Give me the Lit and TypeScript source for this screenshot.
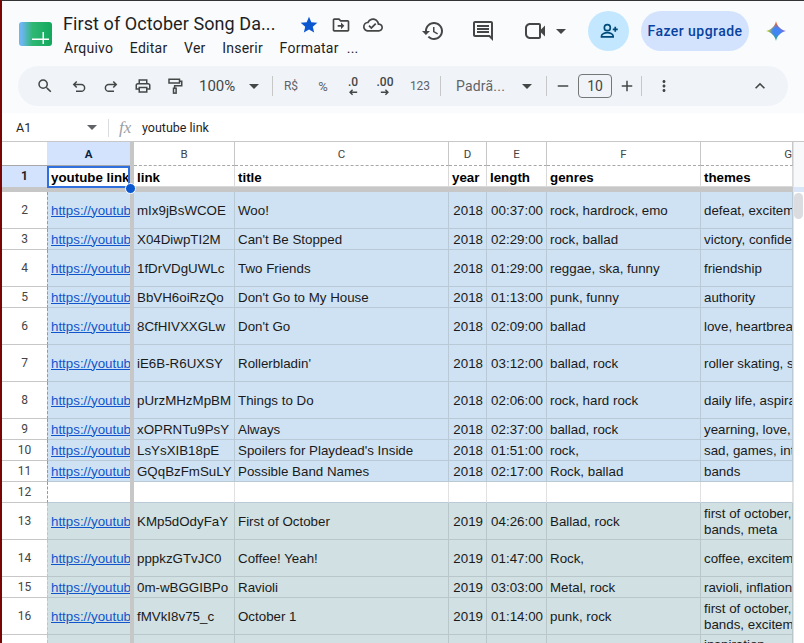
import { LitElement, html, css, svg } from 'lit';
import { customElement } from 'lit/decorators.js';

const BLUE = 'blue';
const TEAL = 'teal';

type Row = {
    n: number;
    h: number;
    tone: string;
    cells: string[];
};

// link, title, year, length, genres, themes
const rows: Row[] = [
    { n: 2, h: 37, tone: BLUE, cells: ['mIx9jBsWCOE', 'Woo!', '2018', '00:37:00', 'rock, hardrock, emo', 'defeat, excitement'] },
    { n: 3, h: 21, tone: BLUE, cells: ['X04DiwpTI2M', "Can't Be Stopped", '2018', '02:29:00', 'rock, ballad', 'victory, confidence'] },
    { n: 4, h: 37, tone: BLUE, cells: ['1fDrVDgUWLc', 'Two Friends', '2018', '01:29:00', 'reggae, ska, funny', 'friendship'] },
    { n: 5, h: 21, tone: BLUE, cells: ['BbVH6oiRzQo', "Don't Go to My House", '2018', '01:13:00', 'punk, funny', 'authority'] },
    { n: 6, h: 37, tone: BLUE, cells: ['8CfHIVXXGLw', "Don't Go", '2018', '02:09:00', 'ballad', 'love, heartbreak'] },
    { n: 7, h: 37, tone: BLUE, cells: ['iE6B-R6UXSY', "Rollerbladin'", '2018', '03:12:00', 'ballad, rock', 'roller skating, summer'] },
    { n: 8, h: 37, tone: BLUE, cells: ['pUrzMHzMpBM', 'Things to Do', '2018', '02:06:00', 'rock, hard rock', 'daily life, aspiration'] },
    { n: 9, h: 21, tone: BLUE, cells: ['xOPRNTu9PsY', 'Always', '2018', '02:37:00', 'ballad, rock', 'yearning, love, time'] },
    { n: 10, h: 21, tone: BLUE, cells: ['LsYsXIB18pE', "Spoilers for Playdead's Inside", '2018', '01:51:00', 'rock,', 'sad, games, internet'] },
    { n: 11, h: 21, tone: BLUE, cells: ['GQqBzFmSuLY', 'Possible Band Names', '2018', '02:17:00', 'Rock, ballad', 'bands'] },
    { n: 12, h: 21, tone: 'empty', cells: ['', '', '', '', '', ''] },
    { n: 13, h: 37, tone: TEAL, cells: ['KMp5dOdyFaY', 'First of October', '2019', '04:26:00', 'Ballad, rock', 'first of october,\nbands, meta'] },
    { n: 14, h: 37, tone: TEAL, cells: ['pppkzGTvJC0', 'Coffee! Yeah!', '2019', '01:47:00', 'Rock,', 'coffee, excitement'] },
    { n: 15, h: 21, tone: TEAL, cells: ['0m-wBGGIBPo', 'Ravioli', '2019', '03:03:00', 'Metal, rock', 'ravioli, inflation'] },
    { n: 16, h: 37, tone: TEAL, cells: ['fMVkI8v75_c', 'October 1', '2019', '01:14:00', 'punk, rock', 'first of october,\nbands, excitement'] },
    { n: 17, h: 53, tone: TEAL, cells: ['', '', '', '', '', 'inspiration,\nfirst of october,\nbands'] },
];

const I = {
    star: 'M12 17.27L18.18 21l-1.64-7.03L22 9.24l-7.19-.61L12 2 9.19 8.63 2 9.24l5.46 4.73L5.82 21z',
    folder: 'M20 6h-8l-2-2H4c-1.1 0-2 .9-2 2v12c0 1.1.9 2 2 2h16c1.1 0 2-.9 2-2V8c0-1.1-.9-2-2-2zm0 12H4V6h5.17l2 2H20v10zm-8-1v-3H8v-2h4V9l4 4-4 4z',
    cloud: 'M19.35 10.04C18.67 6.59 15.64 4 12 4 9.11 4 6.6 5.64 5.35 8.04 2.34 8.36 0 10.91 0 14c0 3.31 2.69 6 6 6h13c2.76 0 5-2.24 5-5 0-2.64-2.05-4.78-4.65-4.96zM19 18H6c-2.21 0-4-1.79-4-4 0-2.05 1.53-3.76 3.56-3.97l1.07-.11.5-.95C8.08 7.14 9.94 6 12 6c2.62 0 4.88 1.86 5.39 4.43l.3 1.5 1.53.11c1.56.1 2.78 1.41 2.78 2.96 0 1.65-1.35 3-3 3zm-9-3.82l-2.09-2.09L6.5 13.5 10 17l6.01-6.01-1.41-1.41z',
    history: 'M13 3c-4.97 0-9 4.03-9 9H1l3.89 3.89.07.14L9 12H6c0-3.87 3.13-7 7-7s7 3.13 7 7-3.13 7-7 7c-1.93 0-3.68-.79-4.94-2.06l-1.42 1.42C8.27 19.99 10.51 21 13 21c4.97 0 9-4.03 9-9s-4.03-9-9-9zm-1 5v5l4.28 2.54.72-1.21-3.5-2.08V8H12z',
    comment: 'M21.99 4c0-1.1-.89-2-1.99-2H4c-1.1 0-2 .9-2 2v12c0 1.1.9 2 2 2h14l4 4-.01-18zM20 4v13.17L18.83 16H4V4h16zM6 12h12v2H6zm0-3h12v2H6zm0-3h12v2H6z',
    video: 'M18 10.48V6c0-1.1-.9-2-2-2H7C4.24 4 2 6.24 2 9v6c0 2.76 2.24 5 5 5h9c1.1 0 2-.9 2-2v-4.48l4 3.98v-11l-4 3.98zM16 18H7c-1.66 0-3-1.34-3-3V9c0-1.66 1.34-3 3-3h9v12z',
    search: 'M15.5 14h-.79l-.28-.27A6.471 6.471 0 0 0 16 9.5 6.5 6.5 0 1 0 9.5 16c1.61 0 3.09-.59 4.23-1.57l.27.28v.79l5 4.99L20.49 19l-4.99-5zm-6 0C7.01 14 5 11.99 5 9.5S7.01 5 9.5 5 14 7.01 14 9.5 11.99 14 9.5 14z',
    print: 'M19 8h-1V3H6v5H5c-1.66 0-3 1.34-3 3v6h4v4h12v-4h4v-6c0-1.66-1.34-3-3-3zM8 5h8v3H8V5zm8 14H8v-4h8v4zm4-4h-2v-2H6v2H4v-4c0-.55.45-1 1-1h14c.55 0 1 .45 1 1v4z',
    plus: 'M19 13h-6v6h-2v-6H5v-2h6V5h2v6h6v2z',
    minus: 'M19 13H5v-2h14v2z',
    dots: 'M12 8c1.1 0 2-.9 2-2s-.9-2-2-2-2 .9-2 2 .9 2 2 2zm0 2c-1.1 0-2 .9-2 2s.9 2 2 2 2-.9 2-2-.9-2-2-2zm0 6c-1.1 0-2 .9-2 2s.9 2 2 2 2-.9 2-2-.9-2-2-2z',
    chevron: 'M12 8l-6 6 1.41 1.41L12 10.83l4.59 4.58L18 14z',
};

const icon = (d: string, size = 18) => html`<svg width=${size} height=${size} viewBox="0 0 24 24" fill="currentColor"><path d=${d}></path></svg>`;

const strokeIcon = (content: unknown, size = 18, width = 2) => html`<svg width=${size} height=${size} viewBox="0 0 24 24" fill="none" stroke="currentColor" stroke-width=${width}>${content}</svg>`;

@customElement('app-root')
export class AppRoot extends LitElement {
    static styles = css`
    :host {
      display: block;
      width: 804px;
      height: 643px;
      overflow: hidden;
      background: #f9fbfd;
      font-family: Roboto, "Liberation Sans", sans-serif;
      color: #1f1f1f;
    }

    svg { display: block; }

    .frame {
      height: 642px;
      overflow: hidden;
      border-top: 1px solid #333;
      border-left: 2px solid #7a0505;
    }

    /* title area */
    .top {
      display: flex;
      height: 65px;
      padding-left: 17px;
    }

    .logo { margin: 21px 11px 0 0; }

    .doc { width: 340px; padding-top: 11px; }

    .doc-line {
      display: flex;
      align-items: center;
      height: 26px;
      color: #444746;
    }

    .doc-line svg { margin-right: 12px; }

    .doc-title {
      width: 236px;
      margin-bottom: 3px;
      font-size: 18px;
      letter-spacing: 0.08px;
      color: #1f1f1f;
      white-space: nowrap;
    }

    .star { color: #0b57d0; }

    .menu {
      display: flex;
      gap: 16.6px;
      margin: 1px 0 0 1px;
      font-size: 14px;
      letter-spacing: 0.25px;
      line-height: 18px;
    }

    .menu .rest { margin-left: -8.6px; }

    .actions {
      display: flex;
      align-items: center;
      height: 40px;
      margin: 10px 0 0 10px;
      color: #444746;
    }

    .act {
      display: flex;
      justify-content: center;
      width: 40px;
      margin-right: 11px;
    }

    .act.history { margin-right: 10px; }
    .act.comment { margin-right: 12px; }
    .act.video { margin-right: 0; }

    .caret {
      width: 0;
      height: 0;
      border-left: 5px solid transparent;
      border-right: 5px solid transparent;
      border-top: 5px solid #444746;
    }

    .top .caret { margin: 0 22px 0 1px; }

    .share {
      display: flex;
      align-items: center;
      justify-content: center;
      width: 41px;
      height: 40px;
      margin-right: 12px;
      border-radius: 50%;
      background: #c2e7ff;
      color: #004a77;
    }

    .upgrade {
      width: 108px;
      height: 40px;
      margin-right: 17px;
      border-radius: 20px;
      background: #d3e3fd;
      color: #0842a0;
      font-size: 14px;
      font-weight: 500;
      letter-spacing: 0.45px;
      line-height: 40px;
      text-align: center;
      white-space: nowrap;
    }

    .gemini {
      width: 20px;
      height: 20px;
      background: radial-gradient(circle, #4285f4 22%, transparent 55%),
        conic-gradient(from 20deg, #e8453c 0deg, #a35fc4 45deg, #4285f4 100deg, #1fa4a0 160deg, #34a853 200deg, #b7c93a 250deg, #f4b400 290deg, #e8453c 360deg);
      clip-path: path("M10 0C10.7 5 15 9.3 20 10C15 10.7 10.7 15 10 20C9.3 15 5 10.7 0 10C5 9.3 9.3 5 10 0Z");
    }

    /* toolbar */
    .tools {
      display: flex;
      align-items: center;
      width: 770px;
      height: 40px;
      margin-left: 16px;
      padding-left: 11px;
      box-sizing: border-box;
      border-radius: 20px;
      background: #f0f4f9;
      color: #444746;
    }

    .t {
      display: flex;
      flex: none;
      align-items: center;
      justify-content: center;
      width: 32px;
      height: 24px;
    }

    .ml2 { margin-left: 2px; }
    .w30 { width: 30px; }

    .zoom { flex: none; margin-left: 8px; width: 38px; font-size: 15px; white-space: nowrap; }

    .tools .caret { flex: none; }
    .zoom + .caret { margin: 0 13px 0 12px; }

    .sep {
      flex: none;
      width: 1px;
      height: 20px;
      background: #c7c7c7;
    }

    .sep.after-num { margin-left: 5px; }

    .money { margin-left: 3px; font-size: 12px; color: #5f6368; }
    .pct { font-size: 13px; color: #5f6368; }

    .dec {
      flex-direction: column;
      height: 28px;
      padding-top: 2px;
      font-size: 12px;
      font-weight: 500;
      line-height: 13px;
    }

    .num { font-size: 12px; margin-left: 5px; color: #5f6368; }

    .font {
      flex: none;
      width: 49px;
      margin: 0 17px 0 15px;
      font-size: 14px;
      letter-spacing: 0.2px;
      color: #5f6368;
      white-space: nowrap;
    }

    .font + .caret { margin-right: 14px; }

    .size-minus { width: 28px; margin-left: 2px; }
    .size-plus { width: 28px; margin-left: 1px; }

    .size {
      flex: none;
      width: 34px;
      height: 24px;
      box-sizing: border-box;
      margin-left: 1px;
      border: 1px solid #747775;
      border-radius: 4px;
      font-size: 14px;
      line-height: 22px;
      text-align: center;
    }

    .more { margin-left: 7px; width: 30px; }
    .collapse { margin-left: 66px; width: 30px; }

    /* formula bar */
    .formula {
      display: flex;
      align-items: center;
      height: 29px;
      margin-top: 7px;
      padding-top: 1px;
      box-sizing: border-box;
      border-bottom: 1px solid #c7c7c7;
      background: #fff;
      font-size: 12.5px;
    }

    .name { width: 71px; padding-left: 14px; }
    .formula .caret { margin-right: 11px; border-top-color: #5f6368; }

    .bar-sep {
      width: 1px;
      height: 18px;
      margin-right: 10px;
      background: #dadce0;
    }

    .fx {
      width: 23px;
      color: #9aa0a6;
      font-family: "Liberation Serif", serif;
      font-size: 17px;
      font-style: italic;
    }

    /* sheet */
    .sheet {
      display: flex;
      background: #fff;
    }

    .grid {
      position: relative;
      width: 791px;
      font-family: "Liberation Sans", Arial, sans-serif;
      font-size: 13.33px;
    }

    .row {
      display: grid;
      grid-template-columns: 45px 83px 4px 101px 214px 38px 60px 154px 92px;
    }

    .col-heads { height: 24px; }

    .col-heads div {
      box-sizing: border-box;
      border-right: 1px solid #c7c7c7;
      border-bottom: 1px dashed #a8a8a8;
      color: #444;
      font-family: Roboto, "Liberation Sans", sans-serif;
      font-size: 11.5px;
      line-height: 25px;
      text-align: center;
      overflow: hidden;
    }

    .col-heads .g { text-align: right; white-space: nowrap; }
    .col-heads .on { background: #d3e3fd; color: #0b1f3f; font-weight: 700; border-bottom-style: solid; border-right: 0; }
    .col-heads .corner { border-bottom-style: solid; border-right: 0; }

    .freeze { background: #c7c7c7; border: 0 !important; }

    .hbar { height: 5px; background: #c7c7c7; }

    .rh {
      box-sizing: border-box;
      padding-bottom: 1px;
      display: flex;
      align-items: center;
      justify-content: center;
      border-bottom: 1px solid #c7c7c7;
      color: #444;
      font-family: Roboto, "Liberation Sans", sans-serif;
      font-size: 12px;
      background: #fff;
    }

    .c {
      box-sizing: border-box;
      display: flex;
      align-items: center;
      padding: 1px 3px 0;
      overflow: hidden;
      border-right: 1px solid #b9c9d6;
      border-bottom: 1px solid #b9c9d6;
      color: #1a1a1a;
      line-height: 16px;
      white-space: pre;
    }

    .c.num-cell { justify-content: flex-end; }

    .c.a {
      padding: 1px 0 0 3px;
      border-right: 0;
      border-left: 1px dashed #8f9aa3;
    }

    .c.a a { color: #1155cc; text-decoration: underline; }

    .blue .c { background: #cfe2f3; }
    .teal .c { background: #d0e0e3; border-color: #b9c7cb; }
    .empty .c { background: #fff; border-right-color: #e1e1e1; border-bottom-color: #b9c9d6; }
    .empty .c.a { border-left-color: #8f9aa3; }

    .head-row { height: 21px; }
    .head-row .rh { background: #d3e3fd; color: #1f1f1f; font-weight: 700; border-bottom: 0; }
    .head-row .c { padding-top: 4px; border-color: #d9d9d9; font-weight: 700; background: #fff; color: #000; }
    .head-row .c.a { padding: 4px 0 0 4px; border-left: 0; }

    .r37 { height: 37px; }
    .r21 { height: 21px; }
    .r53 { height: 53px; }
    .r53 .c { align-items: flex-start; padding-top: 2px; }

    .select {
      position: absolute;
      left: 45px;
      top: 24px;
      width: 83px;
      height: 22px;
      box-sizing: border-box;
      border: 2px solid #2f6fde;
      pointer-events: none;
    }

    .handle {
      position: absolute;
      right: -7.5px;
      bottom: -8px;
      width: 9px;
      height: 9px;
      border: 1px solid #fff;
      border-radius: 50%;
      background: #0b57d0;
    }

    .scroll {
      flex: none;
      width: 11px;
      background: #fff;
      border-left: 1px solid #e3e3e3;
      box-sizing: border-box;
    }

    .scroll-head { height: 45px; background: #f8f9fa; }
    .scroll-band { height: 5px; background: #d9e6f7; }

    .thumb {
      width: 9px;
      height: 26px;
      margin-top: 1px;
      border-radius: 5px;
      background: #dadce0;
    }
  `;

    private renderRow(r: Row) {
        const [link, title, year, length, genres, themes] = r.cells;
        const hasLink = r.tone !== 'empty' && link !== '';
        return html`
      <div class="row ${r.tone} r${r.h}">
        <div class="rh">${r.n}</div>
        <div class="c a">${hasLink ? html`<a>https://youtub</a>` : ''}</div>
        <div class="freeze"></div>
        <div class="c">${link}</div>
        <div class="c">${title}</div>
        <div class="c num-cell">${year}</div>
        <div class="c num-cell">${length}</div>
        <div class="c">${genres}</div>
        <div class="c">${themes}</div>
      </div>
    `;
    }

    render() {
        return html`
      <div class="frame">
        <div class="top">
          <svg class="logo" width="33" height="24" viewBox="0 0 33 24">
            <defs>
              <linearGradient id="lg" x1="0" x2="1" y1="0" y2="0">
                <stop offset="0.08" stop-color="#6db6f2"></stop>
                <stop offset="0.4" stop-color="#2fb874"></stop>
                <stop offset="1" stop-color="#12a85c"></stop>
              </linearGradient>
            </defs>
            <rect width="33" height="24" rx="3" fill="url(#lg)"></rect>
            ${svg`<path d="M13 16.5h17v1.5h-17zM23.5 10h1.5v12h-1.5z" fill="#fff"></path>`}
          </svg>
          <div class="doc">
            <div class="doc-line">
              <span class="doc-title">First of October Song Da...</span>
              <span class="star">${icon(I.star, 20)}</span>
              ${icon(I.folder, 20)}
              ${icon(I.cloud, 20)}
            </div>
            <div class="menu">
              <span>Arquivo</span><span>Editar</span><span>Ver</span><span>Inserir</span><span>Formatar</span><span class="rest">...</span>
            </div>
          </div>
          <div class="actions">
            <div class="act history">${icon(I.history, 24)}</div>
            <div class="act comment">${icon(I.comment, 24)}</div>
            <div class="act video">${icon(I.video, 24)}</div>
            <div class="caret"></div>
            <div class="share">
              ${strokeIcon(svg`<circle cx="10" cy="8" r="3.6"></circle><path d="M3 19v-1c0-2.6 4.5-4 7-4s7 1.4 7 4v1z"></path><path d="M19.5 7v6M16.5 10h6"></path>`, 20)}
            </div>
            <div class="upgrade">Fazer upgrade</div>
            <div class="gemini"></div>
          </div>
        </div>

        <div class="tools">
          <div class="t">${icon(I.search)}</div>
          <div class="t ml2">${strokeIcon(svg`<path d="M9 6L5 10l4 4M5 10h10a4.5 4.5 0 0 1 0 9H8"></path>`)}</div>
          <div class="t">${strokeIcon(svg`<path d="M15 6l4 4-4 4M19 10H9a4.5 4.5 0 0 0 0 9h7"></path>`)}</div>
          <div class="t">${icon(I.print)}</div>
          <div class="t">${strokeIcon(svg`<rect x="4" y="3" width="14" height="5"></rect><path d="M18 5.5h3v6H11.5V15"></path><rect x="10" y="15" width="3.5" height="6.5"></rect>`)}</div>
          <div class="zoom">100%</div>
          <div class="caret"></div>
          <div class="sep"></div>
          <div class="t w30 money">R$</div>
          <div class="t w30 ml2 pct">%</div>
          <div class="t w30 dec">
            <span>.0</span>
            ${strokeIcon(svg`<path d="M22 8H5M11 2L5 8l6 6"></path>`, 10, 3.5)}
          </div>
          <div class="t w30 ml2 dec">
            <span>.00</span>
            ${strokeIcon(svg`<path d="M2 8h17M13 2l6 6-6 6"></path>`, 10, 3.5)}
          </div>
          <div class="t w30 num">123</div>
          <div class="sep after-num"></div>
          <div class="font">Padrã...</div>
          <div class="caret"></div>
          <div class="sep"></div>
          <div class="t size-minus">${icon(I.minus)}</div>
          <div class="size">10</div>
          <div class="t size-plus">${icon(I.plus)}</div>
          <div class="sep"></div>
          <div class="t more">${icon(I.dots)}</div>
          <div class="t collapse">${icon(I.chevron, 20)}</div>
        </div>

        <div class="formula">
          <div class="name">A1</div>
          <div class="caret"></div>
          <div class="bar-sep"></div>
          <div class="fx">fx</div>
          <div>youtube link</div>
        </div>

        <div class="sheet">
          <div class="grid">
            <div class="row col-heads">
              <div class="corner"></div>
              <div class="on">A</div>
              <div class="freeze"></div>
              <div>B</div><div>C</div><div>D</div><div>E</div><div>F</div>
              <div class="g">G</div>
            </div>
            <div class="row head-row">
              <div class="rh">1</div>
              <div class="c a">youtube link</div>
              <div class="freeze"></div>
              <div class="c">link</div>
              <div class="c">title</div>
              <div class="c">year</div>
              <div class="c">length</div>
              <div class="c">genres</div>
              <div class="c">themes</div>
            </div>
            <div class="hbar"></div>
            ${rows.map((r) => this.renderRow(r))}
            <div class="select"><div class="handle"></div></div>
          </div>
          <div class="scroll">
            <div class="scroll-head"></div>
            <div class="scroll-band"></div>
            <div class="thumb"></div>
          </div>
        </div>
      </div>
    `;
    }
}
